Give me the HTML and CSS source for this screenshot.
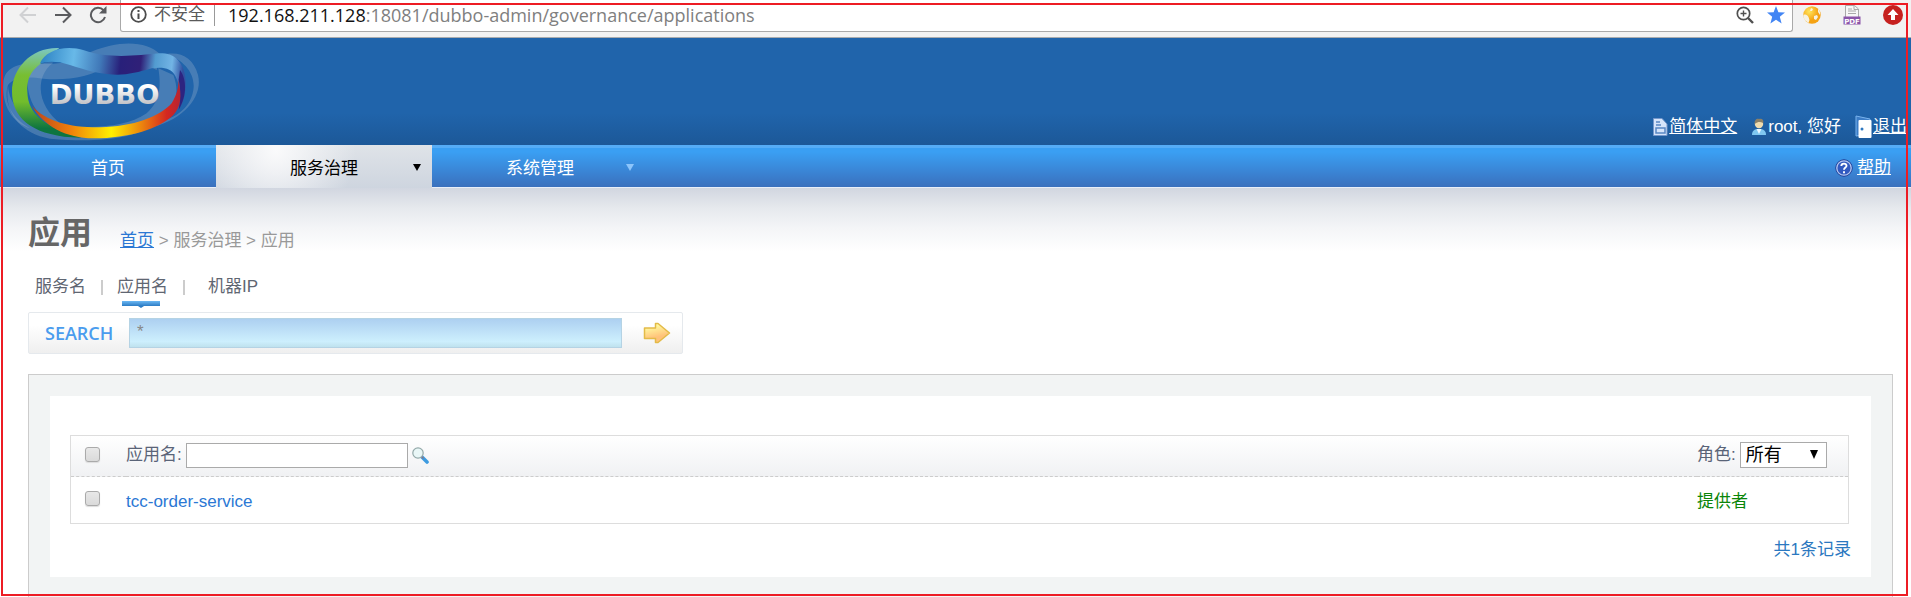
FILE: index.html
```html
<!DOCTYPE html>
<html lang="zh-CN">
<head>
<meta charset="utf-8">
<title>应用</title>
<link rel="stylesheet" href="styles.css">
</head>
<body>
<div class="toolbar">
  <div class="nav-buttons">
    <button type="button" class="icon-btn" aria-label="Back"><svg width="18" height="18" viewBox="0 0 18 18" fill="none" stroke="#d0d1d3" stroke-width="2"><path d="M17 9H2M9 1.500L1.500 9L9 16.500"/></svg></button>
    <button type="button" class="icon-btn" aria-label="Forward"><svg width="18" height="18" viewBox="0 0 18 18" fill="none" stroke="#5a5b5e" stroke-width="2"><path d="M1 9H16M9 1.500L16.500 9L9 16.500"/></svg></button>
    <button type="button" class="icon-btn" aria-label="Reload"><svg width="18" height="18" viewBox="0 0 18 18"><path d="M14.500 4.200A7.200 7.200 0 1 0 16 11" fill="none" stroke="#5a5b5e" stroke-width="2"/><path d="M17.500 0V7.500H10Z" fill="#5a5b5e"/></svg></button>
  </div>
  <div class="omnibox">
    <svg width="17" height="17" viewBox="0 0 17 17"><circle cx="8.500" cy="8.500" r="7.300" fill="none" stroke="#4d4d4d" stroke-width="1.800"/><path d="M7.500 4h2v2h-2zM7.500 7.500h2v5.500h-2z" fill="#4d4d4d"/></svg>
    <span class="insecure">不安全</span>
    <span class="url"><b>192.168.211.128</b>:18081/dubbo-admin/governance/applications</span>
    <button type="button" class="icon-btn" aria-label="Zoom"><svg width="18" height="18" viewBox="0 0 18 18" fill="none" stroke="#505050"><circle cx="7.500" cy="7.500" r="6.200" stroke-width="1.700"/><path d="M12 12l5 5" stroke-width="2.400"/><path d="M4.500 7.500h6M7.500 4.500v6" stroke-width="1.400"/></svg></button>
    <button type="button" class="icon-btn" aria-label="Bookmark"><svg width="18" height="18" viewBox="0 0 18 18"><path d="M9 0l2.400 6.300 6.600.300-5.200 4.200L14.600 17.500 9 13.700 3.400 17.500l1.800-6.700L0 6.600l6.600-.300z" fill="#4285f4"/></svg></button>
  </div>
  <div class="extensions">
    <svg width="18" height="18" viewBox="0 0 18 18"><defs><radialGradient id="globe" cx=".35" cy=".3"><stop offset="0" stop-color="#ffe65c"/><stop offset="1" stop-color="#f5a314"/></radialGradient></defs><circle cx="9" cy="9" r="8.700" fill="url(#globe)"/><path d="M.500 9c2-1 4 0 5 2l1 3-1 3C2 15 0 12 .500 9zM8 2l2 1-1 2-2 0zM11 10l3-1 1 2-2 3-2-1zM15 2l2 4v3l-2-3z" fill="#f6f2e2"/></svg>
    <svg width="18" height="20" viewBox="0 0 18 20"><path d="M2.500 12V.500h9L15.500 4v8" fill="#f7f7f7" stroke="#aaa"/><path d="M11 .500V4.500h4.500M5 6h8M5 8.500h8M5 4h4" fill="none" stroke="#aaa"/><path d="M.500 11.500h17v8H.500z" fill="#8b55a9"/><text x="9" y="18.500" class="pdf">PDF</text></svg>
    <svg width="20" height="20" viewBox="0 0 20 20"><circle cx="10" cy="10" r="10" fill="#c6211f"/><path d="M10 4l5.500 6H12v5H8v-5H4.500z" fill="#fff"/></svg>
  </div>
</div>

<header class="header">
  <svg class="logo" width="200" height="107" viewBox="0 114 600 321" role="img" aria-label="DUBBO">
    <defs>
      <linearGradient id="green" gradientUnits="userSpaceOnUse" x1="150" y1="145" x2="150" y2="412"><stop offset="0" stop-color="#7cc7c2"/><stop offset=".3" stop-color="#78be32"/><stop offset=".6" stop-color="#72bd2c"/><stop offset=".9" stop-color="#0e7540"/></linearGradient>
      <linearGradient id="top" gradientUnits="userSpaceOnUse" x1="120" y1="190" x2="545" y2="240"><stop offset="0" stop-color="#2d83c4"/><stop offset=".23" stop-color="#68b9e8"/><stop offset=".42" stop-color="#4078b8"/><stop offset=".56" stop-color="#28207a"/><stop offset=".7" stop-color="#302078"/><stop offset=".8" stop-color="#529bd0"/><stop offset=".92" stop-color="#72b4e5"/><stop offset="1" stop-color="#3150a0"/></linearGradient>
      <linearGradient id="bottom" gradientUnits="userSpaceOnUse" x1="96" y1="0" x2="545" y2="0"><stop offset="0" stop-color="#b8431e"/><stop offset=".25" stop-color="#ef7d0b"/><stop offset=".53" stop-color="#fff000"/><stop offset=".73" stop-color="#ec850d"/><stop offset=".9" stop-color="#d42820"/><stop offset="1" stop-color="#b32335"/></linearGradient>
      <linearGradient id="word" x1="0" y1="0" x2="0" y2="1"><stop offset=".25" stop-color="#fff"/><stop offset=".8" stop-color="#c2c3c7"/></linearGradient>
    </defs>
    <g fill="#a3b8d2" fill-opacity=".3">
      <path d="M10 250C12 200 60 185 130 192C220 195 250 155 330 137C400 122 450 135 480 162L470 210C430 190 380 175 330 195C270 232 200 242 130 236C80 228 40 232 24 255C10 300 30 350 90 385C40 370 5 320 10 250Z"/>
      <path d="M24 258C12 330 55 400 150 416C300 430 400 412 440 385C550 365 610 290 594 225C580 175 545 155 500 162C550 180 588 220 580 270C570 330 520 360 450 372C400 400 300 415 200 410C120 400 30 340 24 258Z"/>
      <path d="M475 205L520 225C545 290 520 345 450 372C380 392 300 395 200 384L190 378C300 385 380 380 440 340C485 300 482 250 475 205Z"/>
      <path d="M82 230C90 200 120 185 160 188C100 230 110 330 200 382C130 370 80 320 82 230Z"/>
    </g>
    <path fill="url(#green)" d="M178 144C96 140 36 204 36 275C36 350 90 402 215 412L245 413C135 380 84 345 82 275C80 222 105 205 125 188Z"/>
    <path fill="url(#top)" d="M120 190C135 152 195 133 252 151C330 178 410 166 480 160C530 155 557 200 557 245C557 285 550 308 536 330C544 290 540 255 526 228C515 205 490 200 455 205C405 220 370 228 320 222C260 215 225 198 180 187C150 182 130 187 120 190Z"/>
    <path fill="#2d2480" d="M540 210C559 235 563 285 536 329C542 290 542 265 536 239Z"/>
    <path fill="url(#bottom)" d="M96 318C140 365 210 383 300 382C400 380 480 350 515 310C530 285 535 265 536 240C545 290 544 320 520 345C480 385 390 415 280 415C200 415 130 378 96 318Z"/>
    <text x="149" y="312" class="wordmark" fill="url(#word)">DUBBO</text>
  </svg>
  <div class="user-links">
    <span class="user-item"><svg width="15" height="18" viewBox="0 0 15 18"><path d="M.500.500H9L14 6v11.500H.500z" fill="#d5e4fa" stroke="#7497cb"/><path d="M3 4h4M3 7h5M3 10h9v5H3z" fill="none" stroke="#5886c4" stroke-width="1.500"/></svg><a href="#">简体中文</a></span>
    <span class="user-item"><svg width="16" height="18" viewBox="0 0 16 18"><path d="M1 17c0-5 3-6 7-6s7 1 7 6z" fill="#7fc7f0"/><path d="M5.500 11L8 16l2.500-5z" fill="#eaf7ff"/><circle cx="8" cy="6" r="4.200" fill="#f0dcae"/><path d="M3.800 6C3 2 6 0 8 1c3-1 5 1 4.200 4C9 3.500 7 3.500 3.800 6z" fill="#8b8068"/></svg>root, 您好</span>
    <span class="user-item"><svg width="17" height="24" viewBox="0 0 17 24"><path d="M1 1l14 3v15L1 21z" fill="#3b7cc6" stroke="#79b3ed"/><rect x="3.500" y="5" width="13" height="18" rx="1" fill="#fff"/><circle cx="7" cy="14" r="1.500" fill="#2e78c0"/></svg><a href="#">退出</a></span>
  </div>
</header>

<nav class="menu">
  <a class="menu-item" href="#">首页</a>
  <a class="menu-item active" href="#">服务治理<span class="caret"></span></a>
  <a class="menu-item" href="#">系统管理<span class="caret"></span></a>
  <div class="help"><svg width="18" height="18" viewBox="0 0 18 18"><circle cx="9" cy="9" r="8.200" fill="#3159c0" stroke="#1d3a91"/><circle cx="9" cy="9" r="7.200" fill="none" stroke="#b4c5ee" stroke-width="1.300"/><path d="M6.300 7C6.500 3.600 11.800 4 11.500 7C11.300 8.600 9 8.600 9 10.800M9 12.200v2" fill="none" stroke="#fff" stroke-width="1.900"/></svg><a href="#">帮助</a></div>
</nav>

<main class="content">
  <div class="heading">
    <h1>应用</h1>
    <div class="crumbs"><a href="#">首页</a> &gt; 服务治理 &gt; 应用</div>
  </div>
  <div class="tabs">
    <a href="#">服务名</a><a href="#" class="current">应用名</a><a href="#">机器IP</a>
  </div>
  <form class="search">
    <label for="keyword">SEARCH</label>
    <input id="keyword" type="text" value="*">
    <button type="button" class="icon-btn" aria-label="Search"><svg width="28" height="22" viewBox="0 0 28 22"><defs><linearGradient id="arrow" x1="0" y1="0" x2=".3" y2="1"><stop offset=".2" stop-color="#fffaa0"/><stop offset=".8" stop-color="#ffc27a"/></linearGradient></defs><path d="M1.500 6H12.500V1.500H15L26.500 11L15 20.500H12.500V16.500H1.500Z" fill="url(#arrow)" stroke="#e3bb48" stroke-width="1.500" stroke-linejoin="round"/></svg></button>
  </form>
  <section class="panel">
    <div class="sheet">
      <table class="grid">
        <thead>
          <tr>
            <th class="check"><input type="checkbox" aria-label="全选"></th>
            <th><div class="filter"><label for="app">应用名:</label><input id="app" type="text"><svg width="17" height="17" viewBox="0 0 17 17"><path d="M10 10l5 5" stroke="#3d9be0" stroke-width="3.600" stroke-linecap="round"/><path d="M9.500 9.500l2 2" stroke="#8d7280" stroke-width="1.500"/><circle cx="6" cy="6" r="5.200" fill="#e9f7f7" stroke="#93a9a9" stroke-width="1.200"/></svg></div></th>
            <th class="role"><div class="filter"><label for="role">角色:</label><span class="select-box"><select id="role"><option>所有</option></select></span></div></th>
          </tr>
        </thead>
        <tbody>
          <tr>
            <td class="check"><input type="checkbox" aria-label="tcc-order-service"></td>
            <td><a href="#">tcc-order-service</a></td>
            <td class="role provider">提供者</td>
          </tr>
        </tbody>
      </table>
      <p class="total">共1条记录</p>
    </div>
  </section>
</main>
<div class="frame"></div>
</body>
</html>
```
FILE: styles.css
```css
* { box-sizing: border-box; }
html { height: 100%; overflow: hidden; }
body {
  margin: 0;
  min-height: 100%;
  display: flex;
  flex-direction: column;
  background: #fff;
  color: #5a6478;
  font: 17px/24px "Liberation Sans", "Noto Sans CJK SC", sans-serif;
}
svg { display: block; flex: none; }
a { color: #2b78d4; }
input, select, button { font: inherit; margin: 0; }
.icon-btn { padding: 0; border: 0; background: none; }

.toolbar {
  display: flex;
  height: 38px;
  background: #f2f2f2;
  border-bottom: 1px solid #a9abad;
}
.nav-buttons {
  display: flex;
  gap: 17px;
  height: 30px;
  width: 120px;
  padding-left: 19px;
  align-items: center;
}
.omnibox {
  flex: 1;
  display: flex;
  align-items: center;
  gap: 13px;
  height: 32px;
  padding: 0 7px 2px 9px;
  background: #fff;
  border: 1px solid #a9a9a9;
  border-top: 0;
  border-radius: 0 0 3px 3px;
}
.insecure {
  margin-left: -6px;
  padding-right: 9px;
  color: #5a5a5a;
  border-right: 1px solid #999;
  line-height: 22px;
}
.url {
  flex: 1;
  color: #808080;
  font: 18px/24px "Open Sans", "Noto Sans", sans-serif;
}
.url b { color: #111; font-weight: 400; }
.extensions {
  display: flex;
  align-items: center;
  gap: 22px;
  height: 30px;
  padding: 0 8px 0 10px;
}
.pdf {
  font: bold 7px "DejaVu Sans", sans-serif;
  fill: #fff;
  text-anchor: middle;
}

.header {
  display: flex;
  justify-content: space-between;
  align-items: flex-end;
  height: 107px;
  background: linear-gradient(#2064ab 70%, #1c5898);
}
.wordmark { font: bold 82px "DejaVu Sans", sans-serif; }
.user-links {
  display: flex;
  gap: 14px;
  padding: 0 4px 6px 0;
  color: #fff;
}
.user-item { display: flex; align-items: center; gap: 1px; }
.user-item a, .help a { color: #fff; }

.menu {
  display: flex;
  height: 43px;
  background: linear-gradient(#3a9ff3 10%, #3a70bd) no-repeat;
  border-top: 3px solid #55acf6;
  border-bottom: 1px solid #e8eef8;
}
.menu-item {
  position: relative;
  width: 216px;
  line-height: 42px;
  color: #fff;
  text-align: center;
  text-decoration: none;
}
.menu-item.active {
  margin: -3px 0 -1px;
  padding-top: 3px;
  color: #000;
  background: radial-gradient(circle 80px at 60px 5px, #fafafb, transparent), linear-gradient(#dfe3e8, #ced5df);
}
.caret {
  position: absolute;
  right: 14px;
  top: 16px;
  border: 4px solid transparent;
  border-top: 7px solid #8cc5fb;
  border-bottom: 0;
}
.active .caret { right: 11px; top: 19px; border-top-color: #000; }
.help {
  display: flex;
  align-items: center;
  gap: 4px;
  margin-left: auto;
  padding-right: 20px;
}

.content {
  flex: 1;
  display: flex;
  flex-direction: column;
  padding: 21px 18px 0 28px;
  background: linear-gradient(#d1d6e0, #e6e9ed 20px, #f4f5f7 40px, #fff 64px);
}
.heading { display: flex; gap: 28px; align-items: flex-end; }
h1 { margin: 0; color: #666; font-size: 32px; line-height: 48px; }
.crumbs { color: #999; line-height: 32px; }
.tabs { display: flex; margin: 18px 0 0 7px; height: 37px; }
.tabs a {
  position: relative;
  color: #5f6672;
  text-decoration: none;
  padding-right: 31px;
}
.tabs a:nth-child(3) { padding-left: 9px; }
.tabs a:not(:last-child)::after {
  content: "";
  position: absolute;
  right: 14px;
  top: 5px;
  width: 2px;
  height: 15px;
  background: #ccc;
}
.tabs .current::before {
  content: "";
  position: absolute;
  left: 5px;
  top: 26px;
  width: 38px;
  height: 7px;
  background: linear-gradient(#6cb8f4, #2c7cc4 5px);
  clip-path: polygon(0 0, 100% 0, 100% 5px, 58% 5px, 50% 7px, 42% 5px, 0 5px);
}
.search {
  display: flex;
  align-items: center;
  width: 655px;
  height: 42px;
  padding: 0 11px 0 16px;
  border: 1px solid #e5e9ed;
  border-radius: 2px;
  background: linear-gradient(#fff 30%, #efefef);
}
.search label {
  width: 84px;
  color: #4a9cee;
  font: 600 18px/24px "Open Sans", sans-serif;
}
.search input {
  flex: 1;
  min-width: 0;
  height: 30px;
  margin-right: 21px;
  padding: 0 7px 3px;
  color: #888;
  border: 1px solid #b5d3e4;
  background: linear-gradient(#add0f1, #cdeffd 80%, #bfe2ee);
}
.panel {
  flex: 1;
  margin-top: 20px;
  padding: 21px 21px 0;
  border: 1px solid #ccc;
  border-bottom: 0;
  background: #f2f4f4;
}
.sheet { height: 181px; padding: 39px 22px 0 20px; background: #fff; }
.grid {
  width: 100%;
  border: 1px solid #ddd;
  border-collapse: separate;
  border-spacing: 0;
}
th, td { padding: 0; text-align: left; font-weight: 400; }
th { height: 41px; padding-bottom: 2px; border-bottom: 1px dashed #ccc; }
thead { background: linear-gradient(#fff, #f0f1f3); }
td { height: 46px; padding-top: 4px; }
.grid a { text-decoration: none; }
.check { width: 55px; padding: 0 0 3px 14px; }
.check input {
  appearance: none;
  display: block;
  width: 15px;
  height: 15px;
  border: 1px solid #aaa;
  border-radius: 3px;
  background: linear-gradient(#e8e8e8, #dadada);
  box-shadow: 0 1px 1px #ddd;
}
.role { width: 151px; }
.filter { display: flex; align-items: center; gap: 4px; }
.filter input { width: 222px; height: 25px; border: 1px solid #aaa; background: #fff; }
.select-box { position: relative; }
.select-box::after {
  content: "";
  position: absolute;
  right: 9px;
  top: 8px;
  border: 4px solid transparent;
  border-top: 9px solid #000;
  border-bottom: 0;
}
select {
  appearance: none;
  display: block;
  width: 87px;
  height: 26px;
  padding: 0 5px;
  border: 1px solid #aaa;
  background: #fff;
  color: #000;
  font-size: 18px;
}
.provider { color: #0a860a; }
.total { margin: 14px -2px 0 0; text-align: right; color: #2b78c0; }
.frame {
  position: fixed;
  inset: 3px 3px 1px 1px;
  border: 2px solid #ed1c24;
  pointer-events: none;
}
```
